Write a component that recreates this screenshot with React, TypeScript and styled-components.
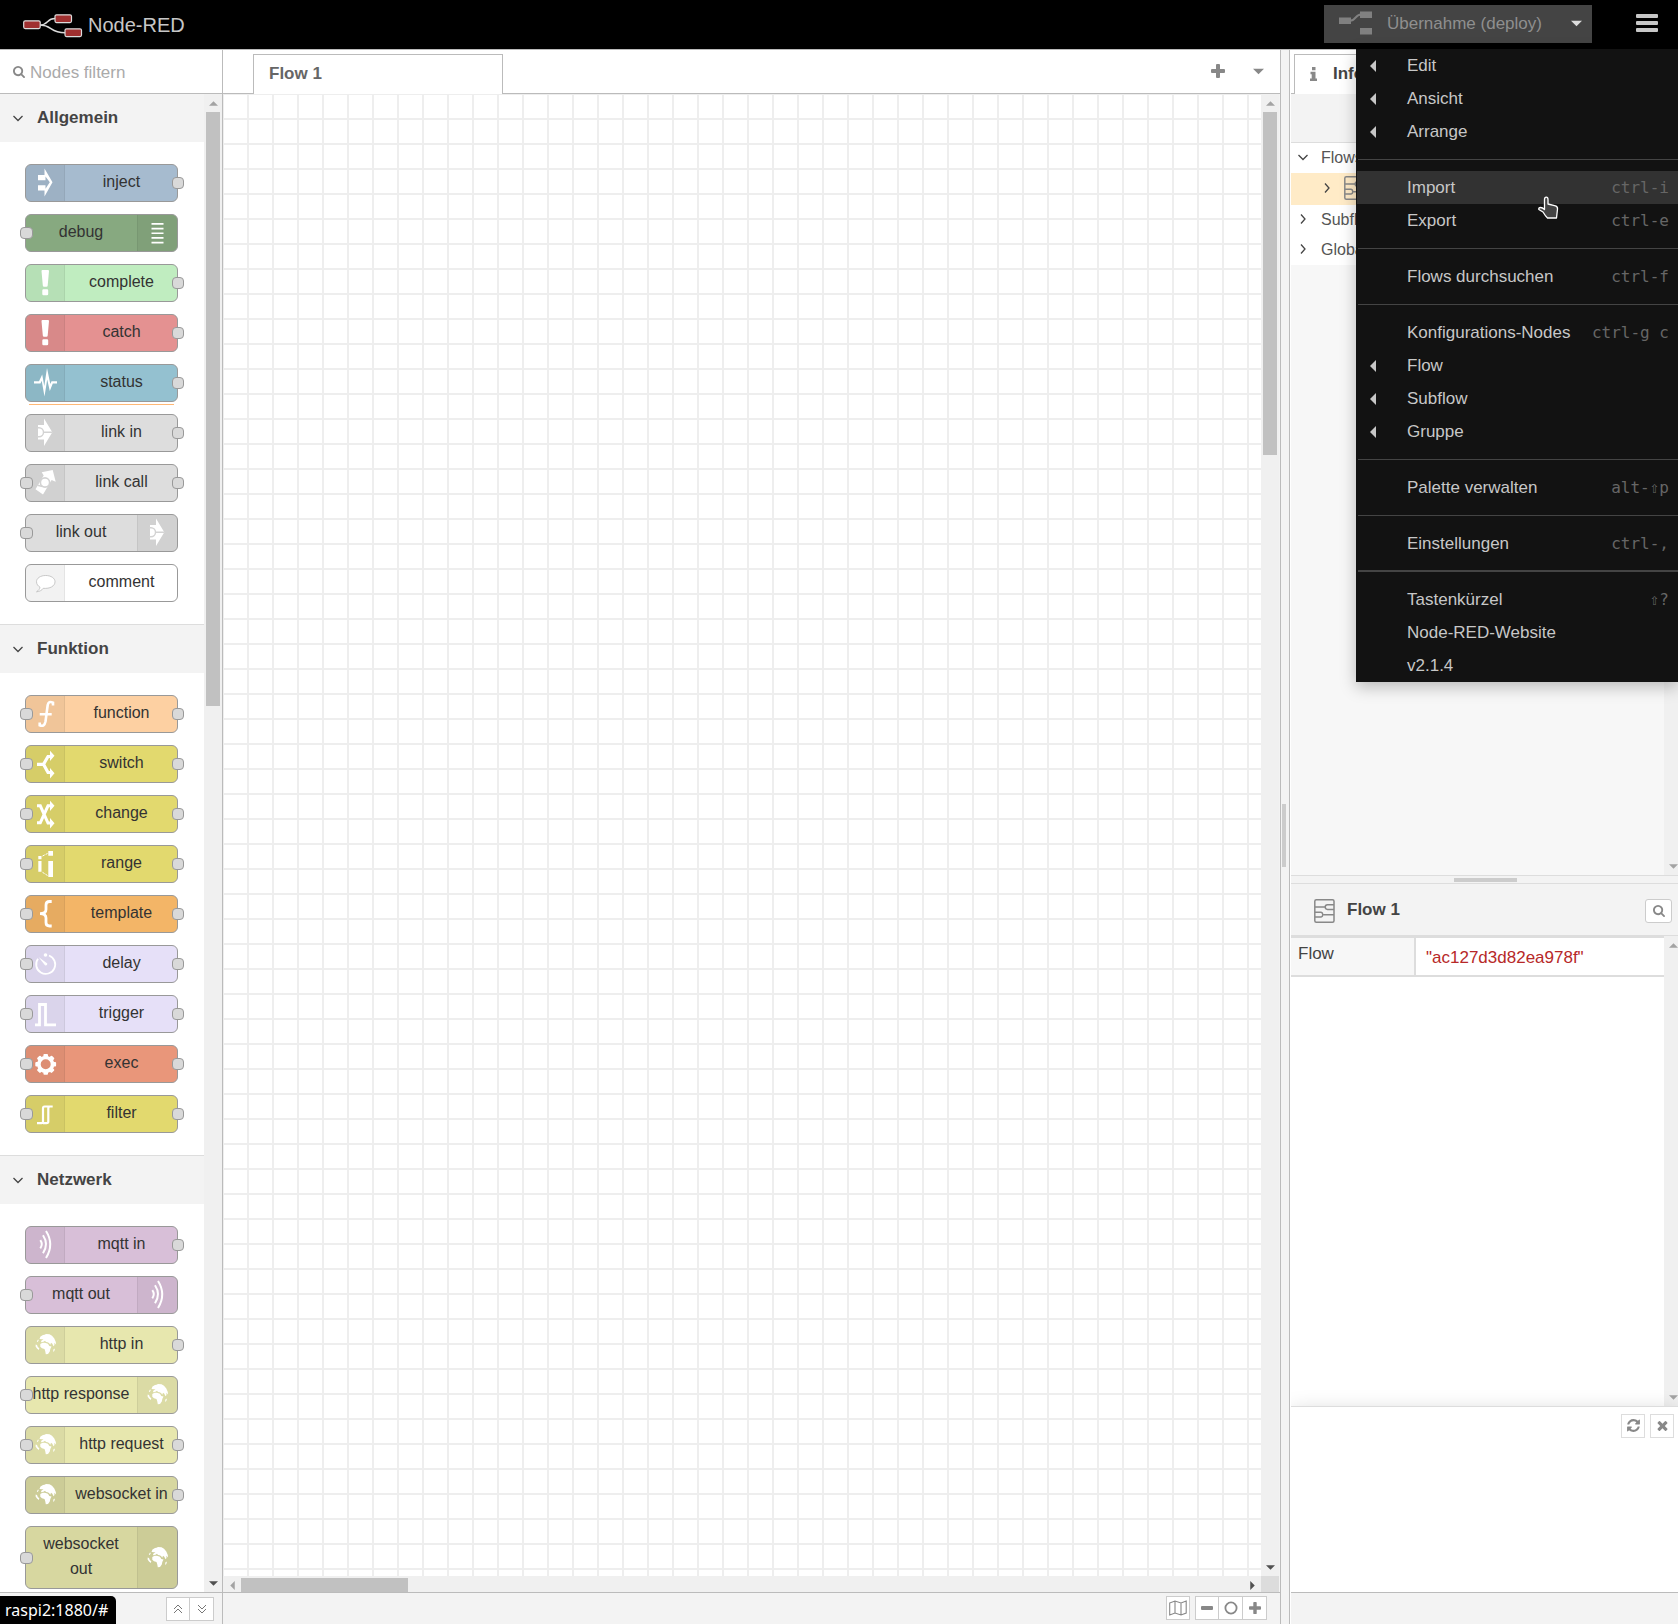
import React from "react";
import styled, { createGlobalStyle, css } from "styled-components";

const c = {
  line: "#bbbbbb",
  soft: "#dddddd",
  panel: "#f3f3f3",
  track: "#f0f0f0",
  thumb: "#c1c1c1",
  text: "#444444",
  icon: "#888888",
  menuText: "#c7c7c7",
};

const Global = createGlobalStyle`
  *, *::before, *::after { box-sizing: border-box; }
  body { margin: 0; background: #fff; color: ${c.text}; font: 17px/25px "Liberation Sans", Arial, sans-serif; }
  button, input { font: inherit; color: inherit; border: 0; padding: 0; margin: 0; background: none; }
  ul { list-style: none; margin: 0; padding: 0; }
  h1, h2, h3 { margin: 0; font-size: 17px; }
  svg { display: block; flex: none; }
`;

/* ---------- frame ---------- */

const Shell = styled.div`
  height: 100vh;
  display: flex;
  flex-direction: column;
  position: relative;
  overflow: hidden;
`;

const Header = styled.header`
  height: 49px;
  flex: none;
  background: #000;
  display: flex;
  align-items: center;
  justify-content: space-between;
  padding: 0 20px 0 23px;
`;

const Brand = styled.h1`
  display: flex;
  align-items: center;
  gap: 5px;
  font-size: 20px;
  font-weight: 400;
  color: #c7c7c7;
  padding-top: 2px;
`;

const HeaderTools = styled.div`
  display: flex;
  align-items: center;
  gap: 44px;
`;

const DeployGroup = styled.div`
  display: flex;
  height: 38px;
  background: #444;
  margin-bottom: 1px;
`;

const DeployButton = styled.button`
  display: flex;
  align-items: center;
  gap: 15px;
  padding: 0 0 2px 15px;
  width: 236px;
  color: #8f8f8f;
`;

const DeployCaret = styled.button`
  width: 32px;
  display: flex;
  align-items: center;
  padding: 0 0 2px 11px;
`;

const MenuButton = styled.button`
  display: flex;
  flex-direction: column;
  gap: 3px;
  width: 22px;
  margin-bottom: 3px;
`;

const MenuBar = styled.span`
  height: 4px;
  border-radius: 1px;
  background: #c7c7c7;
`;

const Main = styled.main`
  flex: 1;
  min-height: 0;
  display: flex;
  border-top: 1px solid ${c.line};
`;

const Footer = styled.footer<{ $pad?: string }>`
  height: 32px;
  flex: none;
  border-top: 1px solid ${c.line};
  background: ${c.panel};
  display: flex;
  justify-content: flex-end;
  align-items: flex-start;
  padding: ${(p) => p.$pad || "4px 8px 0"};
`;

/* ---------- scroll bars ---------- */

const Bar = styled.div<{ $across?: boolean }>`
  flex: none;
  display: flex;
  background: ${c.track};
  ${(p) =>
    p.$across
      ? css`
          height: 16px;
          flex: 1;
          padding-top: 2px;
        `
      : css`
          width: 18px;
          flex-direction: column;
          padding-left: 2px;
        `}
`;

const BarEnd = styled.div<{ $across?: boolean }>`
  flex: none;
  width: ${(p) => (p.$across ? "18px" : "14px")};
  height: ${(p) => (p.$across ? "14px" : "18px")};
  display: flex;
  align-items: center;
  justify-content: center;
`;

const BarTrack = styled.div`
  flex: 1;
  min-width: 0;
  min-height: 0;
`;

const Thumb = styled.div<{ $share: number; $across?: boolean }>`
  background: ${c.thumb};
  width: ${(p) => (p.$across ? p.$share + "%" : "14px")};
  height: ${(p) => (p.$across ? "14px" : p.$share + "%")};
`;

const Clip = styled.div`
  flex: none;
  width: 14px;
  overflow: hidden;
  display: flex;
`;

type Dir = "up" | "down" | "left" | "right";
const TRI: Record<Dir, string> = {
  up: "M0 6L4 2L8 6z",
  down: "M0 2L4 6L8 2z",
  left: "M6 0L2 4L6 8z",
  right: "M2 0L6 4L2 8z",
};

const Triangle = ({ dir, color, size = 9 }: { dir: Dir; color: string; size?: number }) => (
  <svg width={size} height={size} viewBox="0 0 8 8" aria-hidden="true">
    <path d={TRI[dir]} fill={color} />
  </svg>
);

function ScrollBar({ share, across, start, end }: { share?: number; across?: boolean; start: string; end: string }) {
  return (
    <Bar $across={across}>
      <BarEnd $across={across}>
        <Triangle dir={across ? "left" : "up"} color={start} />
      </BarEnd>
      <BarTrack>{share ? <Thumb $share={share} $across={across} /> : null}</BarTrack>
      <BarEnd $across={across}>
        <Triangle dir={across ? "right" : "down"} color={end} />
      </BarEnd>
    </Bar>
  );
}

/* ---------- shared icons ---------- */

const SearchIcon = ({ size = 12 }: { size?: number }) => (
  <svg width={size} height={size} viewBox="0 0 1664 1664" fill={c.icon} aria-hidden="true">
    <path d="M1152 704q0-185-131.500-316.500t-316.500-131.500-316.500 131.500-131.500 316.500 131.500 316.500 316.500 131.500 316.500-131.500 131.500-316.500zm512 832q0 52-38 90t-90 38q-54 0-90-38l-343-342q-179 124-399 124-143 0-273.500-55.500t-225-150-150-225-55.500-273.500 55.500-273.500 150-225 225-150 273.500-55.500 273.500 55.500 225 150 150 225 55.500 273.500q0 220-124 399l343 343q37 37 37 90z" />
  </svg>
);

const RefreshIcon = () => (
  <svg width="15" height="15" viewBox="0 0 1792 1792" fill={c.icon} aria-hidden="true">
    <path d="M1639 1056q0 5-1 7-64 268-268 434.500t-478 166.500q-146 0-282.500-55t-243.500-157l-129 129q-19 19-45 19t-45-19-19-45v-448q0-26 19-45t45-19h448q26 0 45 19t19 45-19 45l-137 137q71 66 161 102t187 36q134 0 250-65t186-179q11-17 53-117 8-23 30-23h192q13 0 22.500 9.500t9.500 22.500zm25-800v448q0 26-19 45t-45 19h-448q-26 0-45-19t-19-45 19-45l138-138q-148-137-349-137-134 0-250 65t-186 179q-11 17-53 117-8 23-30 23h-199q-13 0-22.500-9.500t-9.500-22.500v-7q65-268 270-434.500t480-166.500q146 0 284 55.500t245 156.500l130-129q19-19 45-19t45 19 19 45z" />
  </svg>
);

const CloseIcon = () => (
  <svg width="15" height="15" viewBox="0 0 1792 1792" fill={c.icon} aria-hidden="true">
    <path d="M1490 1322q0 40-28 68l-136 136q-28 28-68 28t-68-28l-294-294-294 294q-28 28-68 28t-68-28l-136-136q-28-28-28-68t28-68l294-294-294-294q-28-28-28-68t28-68l136-136q28-28 68-28t68 28l294 294 294-294q28-28 68-28t68 28l136 136q28 28 28 68t-28 68l-294 294 294 294q28 28 28 68z" />
  </svg>
);

const PlusIcon = ({ size = 14 }: { size?: number }) => (
  <svg width={size} height={size} viewBox="0 0 14 14" fill={c.icon} aria-hidden="true">
    <rect x="0" y="5" width="14" height="4" rx="1" />
    <rect x="5" y="0" width="4" height="14" rx="1" />
  </svg>
);

const Chevron = ({ right }: { right?: boolean }) => (
  <svg width="12" height="12" viewBox="0 0 12 12" fill="none" stroke="#444" strokeWidth="1.300" aria-hidden="true">
    <path d={right ? "M4 1.500L8 6L4 10.500" : "M1.500 4L6 8.500L10.500 4"} />
  </svg>
);

const FlowIcon = () => (
  <svg width="21" height="24" viewBox="0 0 21 24" fill="none" stroke="#888" strokeWidth="1.500" aria-hidden="true">
    <rect x="0.800" y="0.800" width="19.200" height="22.400" rx="1.500" />
    <path d="M1 8H11.500M9.500 15.800H20M1 13.300H7a2.500 2.500 0 0 1 0 4.800H1M20 5.800H13.500a2.200 2.200 0 0 0 0 4.600H20" />
  </svg>
);

/* ---------- palette ---------- */

const Palette = styled.aside`
  width: 223px;
  flex: none;
  display: flex;
  flex-direction: column;
  border-right: 1px solid ${c.line};
`;

const Filter = styled.label`
  height: 44px;
  flex: none;
  display: flex;
  align-items: center;
  gap: 5px;
  padding: 2px 8px 0 13px;
  border-bottom: 1px solid ${c.line};
  svg { margin-bottom: 2px; }
`;

const FilterInput = styled.input`
  flex: 1;
  min-width: 0;
  height: 25px;
  outline: 0;
  &::placeholder { color: #aaa; opacity: 1; }
`;

const PaletteBody = styled.div`
  flex: 1;
  min-height: 0;
  display: flex;
`;

const PaletteList = styled.div`
  flex: 1;
  overflow: hidden;
`;

const Category = styled.section`
  border-bottom: 1px solid ${c.soft};
`;

const CategoryHeader = styled.button`
  width: 100%;
  height: 48px;
  background: ${c.panel};
  display: flex;
  align-items: center;
  gap: 13px;
  padding: 0 12px 1px;
  font-weight: 700;
`;

const NodeList = styled.ul`
  display: flex;
  flex-direction: column;
  gap: 12px;
  padding: 22px 26px 22px 25px;
`;

const NodeBox = styled.li<{ $color: string; $flip?: boolean; $rule?: boolean }>`
  position: relative;
  display: flex;
  flex-direction: ${(p) => (p.$flip ? "row-reverse" : "row")};
  min-height: 38px;
  border: 1px solid #999;
  border-radius: 6px;
  background: ${(p) => p.$color};
  ${(p) =>
    p.$rule &&
    css`
      &::after {
        content: "";
        position: absolute;
        left: 3px;
        right: 3px;
        top: 39px;
        height: 1px;
        background: #ffb875;
      }
    `}
`;

const NodeIconCell = styled.span<{ $flip?: boolean }>`
  flex: none;
  width: ${(p) => (p.$flip ? 40 : 39)}px;
  display: flex;
  align-items: center;
  justify-content: center;
  padding-right: ${(p) => (p.$flip ? 2 : 0)}px;
  background: rgba(0, 0, 0, 0.05);
  border-radius: ${(p) => (p.$flip ? "0 5px 5px 0" : "5px 0 0 5px")};
  border: 0 solid rgba(0, 0, 0, 0.06);
  border-width: ${(p) => (p.$flip ? "0 0 0 1px" : "0 1px 0 0")};
`;

const NodeLabel = styled.span<{ $flip?: boolean }>`
  flex: 1;
  min-width: 0;
  padding: ${(p) => (p.$flip ? "4px 7px 7px 6px" : "4px 6px 7px 7px")};
  font-size: 16px;
  line-height: 25px;
  text-align: center;
  color: #333;
`;

const Port = styled.span<{ $side: "in" | "out" }>`
  position: absolute;
  top: calc(50% - 6px);
  ${(p) => (p.$side === "in" ? "left: -6px; width: 13px;" : "right: -7px; width: 12px;")}
  height: 12px;
  border: 1px solid #999;
  border-radius: 4px;
  background: #d9d9d9;
`;

const gear = Array.from({ length: 8 }, (_, i) => i * 45);

const linkArrow = (
  <>
    <path d="M6 7H12V0.500L20.300 14.300L12 28V21.500H6z" />
    <g fill="none" stroke="#d3d3d3" strokeWidth="1.400">
      <path d="M5 9.800h2a4.500 4.500 0 0 1 0 9h-2M11.800 14.300H20" />
    </g>
  </>
);

const waves = (
  <g fill="none" stroke="#fff" strokeWidth="2">
    <path d="M8.300 10.200Q11.300 14.300 8.300 18.300M11 5.300Q17 14.300 11 23.300M14 1Q22.500 14.300 14 28" />
  </g>
);

const globe = (
  <>
    <path d="M7.500 9L8.500 6.500L11 5L12.500 4.800L14 4L17.500 4.200L20 5.800L22.300 8.500L23.800 12L24 14.500L23 13.500L22.300 12.800L22.500 15L21.500 16.300L20.300 13.800L19 12.800L18.300 14.800L17 13L15.500 12.300L14 12L13 10.800L11.500 11.800L9 12.300L9.300 10.800L11.500 9.300L10 9.300z" />
    <path d="M8.300 14L10.500 12.800L13 12.800L16 13.800L17.300 16L19.500 16.500L18.300 19L17.800 21.500L16 24L13.800 24.300L13.300 21.500L12.500 19L10 18.300L8.300 16.800z" />
    <path d="M3.700 14.500L5 15L5.800 17L7.300 18.300L6.800 20L5 18.500L3.600 16.500zM21.300 19.500L23 18.500L22.300 21L21.300 22zM4.800 11.500L6 9.500L6.800 10L5.800 12z" />
  </>
);

const ICONS: Record<string, React.ReactNode> = {
  inject: (
    <path
      fillRule="evenodd"
      d="M6 7H12.500V0.500L20.500 14.300L12.500 28.500V22.500H6V17.300H13.500V20.800L17.800 14.300L13.500 8.500V12.300H6z"
    />
  ),
  debug: <path d="M7.500 5h12v1.700h-12zM7.500 9.700h12v1.700h-12zM7.500 14.400h12v1.700h-12zM7.500 19.100h12v1.700h-12zM7.500 23.700h12v1.700h-12z" />,
  alert: <path d="M9.500 3Q9.500 2 10.500 2H16Q17 2 17 3L15.700 17.500Q15.600 18.700 14.500 18.700H12Q11 18.700 10.800 17.500zM10.300 22.500q0-1.200 1.200-1.200h3.500q1.200 0 1.200 1.200v3.500q0 1.200-1.200 1.200h-3.500q-1.200 0-1.200-1.200z" />,
  status: (
    <path
      d="M2 13.300H7L10.200 6.500L12.300 18L15 0L18.300 16L19.500 13.300H25V15.500H20.800L17.800 23L15.200 11.500L12.500 28.500L9.700 12.800L8.500 15.500H2z"
    />
  ),
  link: linkArrow,
  call: (
    <>
      <path d="M9.700 4.300L20.700 2L23.700 13.700L19.600 12L11 26.500L3.500 21.300L11.700 7.500z" />
      <circle cx="13" cy="14.500" r="4.600" fill="#fff" stroke="#d3d3d3" strokeWidth="1.600" />
      <path d="M10.500 18.500L5.500 17.300" stroke="#d3d3d3" strokeWidth="1.500" />
    </>
  ),
  comment: (
    <path
      d="M13.700 7.500C8.500 7.500 4.500 10.200 4.500 13.700C4.500 16.200 6 18 8 19.200C7.800 21 6.500 22.500 4.500 23.800C7.500 23.500 10 22.300 11.200 20.300C18 21 23 18 23 13.700C23 10.200 19 7.500 13.700 7.500z"
      stroke="#bbb"
      strokeWidth="0.800"
    />
  ),
  function: (
    <path
      d="M21 6.500V3.600Q16.500 1.500 15.700 6L13.500 22.500Q12.300 28.300 7.700 26.300V23.500M7.700 15.300H19.700"
      fill="none"
      stroke="#fff"
      strokeWidth="2.600"
    />
  ),
  switch: (
    <>
      <path d="M5 15.300H11.500L16 7.500H19M11.500 15.300L16 23.500H19" fill="none" stroke="#fff" strokeWidth="3.200" />
      <path d="M18 1.800L22.500 6.800L18 12zM18 19L22.500 24.300L18 29.500z" />
    </>
  ),
  change: (
    <>
      <path d="M5 6.800H8.300L16 24H19M5 23.800H8.300L16 6.800H19" fill="none" stroke="#fff" strokeWidth="3" />
      <path d="M18 1.800L22.500 6.800L18 12zM18 19L22.500 24.300L18 29.500z" />
    </>
  ),
  range: (
    <>
      <path d="M6.300 7h3.200v3.200h-3.200zM6.300 12h3.200v10.700h-3.200zM16.300 2h4.700v4.700h-4.700zM16.300 12h4.700v16h-4.700z" />
      <path d="M10.500 7L15.500 4.500M10.500 23.300L15.500 26.500" stroke="#fff" strokeWidth="1" strokeDasharray="2.500 1" />
    </>
  ),
  template: (
    <path
      d="M19.700 2.500H17.500Q14 2.500 14 6V10.500Q14 14.700 8 14.700Q14 14.700 14 19V23.500Q14 27 17.500 27H19.700"
      fill="none"
      stroke="#fff"
      strokeWidth="2.800"
    />
  ),
  delay: (
    <>
      <path d="M17 6.500A9.500 9.500 0 1 1 6 9.800" fill="none" stroke="#fff" strokeWidth="1.800" />
      <path d="M6.500 8L15.300 14.500Q15.500 16.800 13 16.300z" />
      <circle cx="13.500" cy="6" r="1.800" />
    </>
  ),
  trigger: <path d="M3 25.800H7.500V5.500H13.500V25.800H24" fill="none" stroke="#fff" strokeWidth="2.800" />,
  exec: (
    <g transform="translate(13.700 15.300)">
      <circle r="6.800" fill="none" stroke="#fff" strokeWidth="3.600" />
      {gear.map((a) => (
        <rect key={a} x="-2.300" y="-10.400" width="4.600" height="4" rx="1" transform={`rotate(${a})`} />
      ))}
    </g>
  ),
  filter: (
    <path
      d="M5 24.200H9.500Q11 24.200 11 22.500V9.500Q11 7.500 12.500 7.500H20.700M11 24.200H14.500Q16.300 24.200 16.300 22.500V9.500Q16.300 7.500 18 7.500"
      fill="none"
      stroke="#fff"
      strokeWidth="2.200"
    />
  ),
  waves,
  globe,
};

interface PaletteNode {
  name: string;
  color: string;
  icon: string;
  ports: string;
  flip?: boolean;
  rule?: boolean;
}

const n = (name: string, color: string, icon: string, ports: string, flip?: boolean, rule?: boolean): PaletteNode => ({
  name, color, icon, ports, flip, rule,
});

const CATEGORIES: { title: string; nodes: PaletteNode[] }[] = [
  {
    title: "Allgemein",
    nodes: [
      n("inject", "#a6bbcf", "inject", "o"),
      n("debug", "#87a980", "debug", "i", true),
      n("complete", "#c0edc0", "alert", "o"),
      n("catch", "#e49191", "alert", "o"),
      n("status", "#94c1d0", "status", "o", false, true),
      n("link in", "#dddddd", "link", "o"),
      n("link call", "#dddddd", "call", "io"),
      n("link out", "#dddddd", "link", "i", true),
      n("comment", "#ffffff", "comment", ""),
    ],
  },
  {
    title: "Funktion",
    nodes: [
      n("function", "#fdd0a2", "function", "io"),
      n("switch", "#e2d96e", "switch", "io"),
      n("change", "#e2d96e", "change", "io"),
      n("range", "#e2d96e", "range", "io"),
      n("template", "#f3b567", "template", "io"),
      n("delay", "#e6e0f8", "delay", "io"),
      n("trigger", "#e6e0f8", "trigger", "io"),
      n("exec", "#e9967a", "exec", "io"),
      n("filter", "#e2d96e", "filter", "io"),
    ],
  },
  {
    title: "Netzwerk",
    nodes: [
      n("mqtt in", "#d8bfd8", "waves", "o"),
      n("mqtt out", "#d8bfd8", "waves", "i", true),
      n("http in", "#e7e7ae", "globe", "o"),
      n("http response", "#e7e7ae", "globe", "i", true),
      n("http request", "#e7e7ae", "globe", "io"),
      n("websocket in", "#d7d7a0", "globe", "o"),
      n("websocket out", "#d7d7a0", "globe", "i", true),
    ],
  },
];

function NodeItem({ node }: { node: PaletteNode }) {
  return (
    <NodeBox $color={node.color} $flip={node.flip} $rule={node.rule}>
      <NodeIconCell $flip={node.flip}>
        <svg width="26" height="30" viewBox="0 0 26 30" fill="#fff" aria-hidden="true">
          {ICONS[node.icon]}
        </svg>
      </NodeIconCell>
      <NodeLabel $flip={node.flip}>{node.name}</NodeLabel>
      {node.ports.includes("i") && <Port $side="in" />}
      {node.ports.includes("o") && <Port $side="out" />}
    </NodeBox>
  );
}

/* ---------- small square buttons ---------- */

const ButtonGroup = styled.div`
  display: flex;
`;

const SquareButton = styled.button<{ $soft?: boolean; $round?: boolean; $wide?: boolean }>`
  width: ${(p) => (p.$wide ? 27 : 24)}px;
  height: 24px;
  display: flex;
  align-items: center;
  justify-content: center;
  padding-bottom: 1px;
  border: 1px solid ${(p) => (p.$soft ? c.soft : "#cccccc")};
  border-radius: ${(p) => (p.$round ? 3 : 0)}px;
  background: #fff;
  ${ButtonGroup} & + & { border-left: 0; }
`;

/* ---------- workspace ---------- */

const Workspace = styled.section`
  flex: 1;
  min-width: 0;
  display: flex;
  flex-direction: column;
  background: ${c.panel};
`;

const Tabs = styled.div<{ $pad: number }>`
  height: 44px;
  flex: none;
  display: flex;
  align-items: flex-end;
  background: linear-gradient(${c.line}, ${c.line}) bottom / 100% 1px no-repeat #fff;
  padding-left: ${(p) => p.$pad}px;
`;

const Tab = styled.button<{ $width: number; $strong?: boolean }>`
  width: ${(p) => p.$width}px;
  height: 40px;
  border: 1px solid ${c.line};
  border-bottom: 0;
  background: #fff;
  display: flex;
  align-items: center;
  gap: 16px;
  padding: 0 15px 2px;
  font-weight: 700;
  color: ${(p) => (p.$strong ? c.text : "#666666")};
`;

const TabTools = styled.div`
  margin-left: auto;
  height: 44px;
  display: flex;
  align-items: center;
  gap: 28px;
  padding: 0 16px 2px 0;
  button { display: flex; }
`;

const CanvasRow = styled.div`
  flex: 1;
  min-height: 0;
  display: flex;
  padding-right: 1px;
`;

const CanvasColumn = styled.div`
  flex: 1;
  min-width: 0;
  display: flex;
  flex-direction: column;
`;

const Canvas = styled.div`
  flex: 1;
  background-color: #fff;
  background-image: linear-gradient(#eee 2px, transparent 2px), linear-gradient(90deg, #eee 2px, transparent 2px);
  background-size: 25px 25px;
  background-position: -1px -1px;
`;

const BarRow = styled.div`
  display: flex;
  height: 16px;
`;

const CornerColumn = styled.div`
  display: flex;
  flex-direction: column;
`;

const BarFill = styled.div`
  flex: 1;
  display: flex;
`;

const Corner = styled.div`
  height: 16px;
  background: #dcdcdc;
`;

const FooterTools = styled.div`
  display: flex;
  gap: 5px;
`;

const Separator = styled.div`
  width: 10px;
  flex: none;
  border: solid ${c.line};
  border-width: 0 1px;
  background: ${c.panel};
  display: flex;
  align-items: center;
  padding: 0 0 3px 1px;
`;

const Grip = styled.span<{ $flat?: boolean }>`
  width: ${(p) => (p.$flat ? 63 : 4)}px;
  height: ${(p) => (p.$flat ? 4 : 63)}px;
  background: #ccc;
`;

/* ---------- sidebar ---------- */

const Sidebar = styled.aside`
  width: 388px;
  flex: none;
  display: flex;
  flex-direction: column;
  background: #fff;
  padding-left: 1px;
`;

const Outliner = styled.div`
  flex: 782 0 0;
  min-height: 0;
  display: flex;
  flex-direction: column;
`;

const OutlinerBar = styled.div`
  height: 49px;
  background: ${c.panel};
  border-bottom: 1px solid ${c.soft};
`;

const SplitRow = styled.div`
  flex: 1;
  min-height: 0;
  display: flex;
`;

const Tree = styled.ul`
  flex: 1;
  background: #f7f7f7;
`;

const TreeRow = styled.li<{ $deep?: boolean }>`
  height: ${(p) => (p.$deep ? 32 : 30)}px;
  display: flex;
  align-items: center;
  gap: ${(p) => (p.$deep ? 11 : 12)}px;
  padding: 0 ${(p) => (p.$deep ? 30 : 6)}px 2px;
  background: ${(p) => (p.$deep ? "#ffebc7" : "#fff")};
  font-size: 16px;
  color: #555;
`;

const RowSeparator = styled.div`
  height: 9px;
  flex: none;
  border: solid ${c.soft};
  border-width: 1px 0;
  background: ${c.panel};
  display: flex;
  align-items: center;
  justify-content: center;
  padding-left: 2px;
`;

const InfoHeader = styled.div`
  height: 51px;
  flex: none;
  background: ${c.panel};
  display: flex;
  align-items: center;
  gap: 12px;
  padding: 3px 6px 0 23px;
  h2 { flex: 1; padding-bottom: 3px; }
`;

const Props = styled.div`
  flex: 470 0 0;
  min-height: 0;
  display: flex;
  border-top: 1px solid ${c.soft};
`;

const PropsBody = styled.div`
  flex: 1;
`;

const PropsTable = styled.table`
  width: 100%;
  border-collapse: separate;
  border-spacing: 0;
  border: solid ${c.soft};
  border-width: 2px 0;
  th, td { height: 37px; font-weight: 400; text-align: left; padding: 0 7px; }
  th { width: 123px; background: #f7f7f7; vertical-align: top; padding-top: 3px; }
  td { border-left: 2px solid ${c.soft}; color: #b72828; padding: 1px 10px 0; }
`;

const Tips = styled.div`
  height: 186px;
  flex: none;
  border-top: 1px solid ${c.soft};
  background: #fff;
  box-shadow: 0 5px 20px rgba(0, 0, 0, 0.18);
  clip-path: inset(-30px 0 0 0);
  display: flex;
  justify-content: flex-end;
  align-items: flex-start;
  gap: 5px;
  padding: 7px 4px 0;
`;

/* ---------- main menu ---------- */

const Menu = styled.nav`
  position: absolute;
  top: 49px;
  right: 0;
  width: 322px;
  background: #121212;
  box-shadow: 0 5px 15px rgba(0, 0, 0, 0.25);
`;

const MenuItem = styled.a<{ $hover?: boolean }>`
  height: 33px;
  margin-left: 1px;
  display: flex;
  align-items: center;
  padding: 0 9px 0 10px;
  color: ${c.menuText};
  text-decoration: none;
  background: ${(p) => (p.$hover ? "#323232" : "transparent")};
`;

const MenuMark = styled.span`
  width: 40px;
  padding-left: 1px;
  flex: none;
`;

const Shortcut = styled.kbd`
  margin-left: auto;
  font: 16px/25px "DejaVu Sans Mono", monospace;
  color: #666;
`;

const MenuRule = styled.div<{ $thick?: boolean }>`
  height: ${(p) => (p.$thick ? 2 : 1)}px;
  margin: ${(p) => (p.$thick ? "10px 0 11px 2px" : "11px 0 11px 2px")};
  background: #444;
`;

const Pointer = styled.svg`
  position: absolute;
  top: 196px;
  right: 119px;
`;

const StatusBubble = styled.div`
  position: absolute;
  left: 0;
  bottom: 0;
  height: 28px;
  padding: 2px 8px 0 5px;
  background: #000;
  color: #fff;
  border-radius: 0 5px 0 0;
  font: 16px/25px "Noto Sans", sans-serif;
`;

type Entry = { label: string; keys?: string; sub?: boolean; hover?: boolean };
const MENU: Entry[][] = [
  [{ label: "Edit", sub: true }, { label: "Ansicht", sub: true }, { label: "Arrange", sub: true }],
  [{ label: "Import", keys: "ctrl-i", hover: true }, { label: "Export", keys: "ctrl-e" }],
  [{ label: "Flows durchsuchen", keys: "ctrl-f" }],
  [
    { label: "Konfigurations-Nodes", keys: "ctrl-g c" },
    { label: "Flow", sub: true },
    { label: "Subflow", sub: true },
    { label: "Gruppe", sub: true },
  ],
  [{ label: "Palette verwalten", keys: "alt-⇧p" }],
  [{ label: "Einstellungen", keys: "ctrl-," }],
  [{ label: "Tastenkürzel", keys: "⇧?" }, { label: "Node-RED-Website" }, { label: "v2.1.4" }],
];

export default function App() {
  return (
    <Shell>
      <Global />
      <Header>
        <Brand>
          <svg width="60" height="24" viewBox="0 0 60 24" fill="none" stroke="#dcdcdc" aria-hidden="true">
            <path d="M17 11C26 11 23 4.500 32 4.500M17 11C29 11 27 18.700 42 18.700" strokeWidth="1.500" />
            <g fill="#a03030" strokeWidth="1.200">
              <rect x="0.700" y="6.800" width="16.500" height="7.800" rx="1.500" />
              <rect x="32" y="0.800" width="16.500" height="7.800" rx="1.500" />
              <rect x="42" y="14.800" width="16.500" height="7.800" rx="1.500" />
            </g>
          </svg>
          <span>Node-RED</span>
        </Brand>
        <HeaderTools>
          <DeployGroup>
            <DeployButton>
              <svg width="33" height="24" viewBox="0 0 33 24" aria-hidden="true">
                <path d="M11 9.800C17 9.800 16 3.500 22 3.500" fill="none" stroke="#808080" strokeWidth="2" />
                <path d="M0 6.500h12v6.500H0zM21 0.500h12v6.500H21zM21 17h12v6.500H21z" fill="#808080" />
              </svg>
              Übernahme (deploy)
            </DeployButton>
            <DeployCaret aria-label="Deploy-Optionen">
              <Triangle dir="down" color="#dddddd" size={11} />
            </DeployCaret>
          </DeployGroup>
          <MenuButton aria-label="Menü">
            <MenuBar />
            <MenuBar />
            <MenuBar />
          </MenuButton>
        </HeaderTools>
      </Header>

      <Main>
        <Palette>
          <Filter>
            <SearchIcon />
            <FilterInput type="text" placeholder="Nodes filtern" aria-label="Nodes filtern" />
          </Filter>
          <PaletteBody>
            <PaletteList>
              {CATEGORIES.map((cat) => (
                <Category key={cat.title}>
                  <CategoryHeader>
                    <Chevron />
                    {cat.title}
                  </CategoryHeader>
                  <NodeList>
                    {cat.nodes.map((node) => (
                      <NodeItem key={node.name} node={node} />
                    ))}
                  </NodeList>
                </Category>
              ))}
            </PaletteList>
            <ScrollBar share={40.6} start="#a3a3a3" end="#505050" />
          </PaletteBody>
          <Footer>
            <ButtonGroup>
              <SquareButton aria-label="Alle einklappen">
                <svg width="10" height="10" viewBox="0 0 10 10" fill="none" stroke="#777" aria-hidden="true">
                  <path d="M1 5L5 1L9 5M1 9L5 5L9 9" />
                </svg>
              </SquareButton>
              <SquareButton aria-label="Alle ausklappen">
                <svg width="10" height="10" viewBox="0 0 10 10" fill="none" stroke="#777" aria-hidden="true">
                  <path d="M1 1L5 5L9 1M1 5L5 9L9 5" />
                </svg>
              </SquareButton>
            </ButtonGroup>
          </Footer>
        </Palette>

        <Workspace>
          <Tabs $pad={30}>
            <Tab $width={250}>Flow 1</Tab>
            <TabTools>
              <button aria-label="Flow hinzufügen">
                <PlusIcon />
              </button>
              <button aria-label="Flows auflisten">
                <Triangle dir="down" color={c.icon} size={11} />
              </button>
            </TabTools>
          </Tabs>
          <CanvasRow>
            <CanvasColumn>
              <Canvas />
              <BarRow>
                <ScrollBar across share={16.7} start="#a3a3a3" end="#505050" />
              </BarRow>
            </CanvasColumn>
            <CornerColumn>
              <BarFill>
                <ScrollBar share={23.7} start="#a3a3a3" end="#505050" />
              </BarFill>
              <Corner />
            </CornerColumn>
          </CanvasRow>
          <Footer $pad="3px 13px 0">
            <FooterTools>
              <SquareButton aria-label="Navigator">
                <svg width="18" height="16" viewBox="0 0 18 16" fill="none" stroke="#888" strokeWidth="1.100" aria-hidden="true">
                  <path d="M0.700 3L6 1L12 3L17.200 1V13L12 15L6 13L0.700 15zM6 1V13M12 3V15" />
                </svg>
              </SquareButton>
              <ButtonGroup>
                <SquareButton aria-label="Verkleinern">
                  <svg width="12" height="4" viewBox="0 0 12 4" fill={c.icon} aria-hidden="true">
                    <rect width="12" height="4" rx="1" />
                  </svg>
                </SquareButton>
                <SquareButton aria-label="Zoom zurücksetzen">
                  <svg width="14" height="14" viewBox="0 0 14 14" fill="none" stroke={c.icon} strokeWidth="1.800" aria-hidden="true">
                    <circle cx="7" cy="7" r="5.600" />
                  </svg>
                </SquareButton>
                <SquareButton aria-label="Vergrößern">
                  <PlusIcon size={12} />
                </SquareButton>
              </ButtonGroup>
            </FooterTools>
          </Footer>
        </Workspace>

        <Separator>
          <Grip />
        </Separator>

        <Sidebar>
          <Tabs $pad={3}>
            <Tab $width={250} $strong>
              <svg width="7" height="14" viewBox="0 0 7 14" fill={c.icon} aria-hidden="true">
                <path d="M2 0h3.500v3.300H2zM0.500 4.800H5.500V11.500H7V14H0V11.500H1.700V7.300H0.500z" />
              </svg>
              Info
            </Tab>
          </Tabs>
          <Outliner>
            <OutlinerBar />
            <SplitRow>
              <Tree>
                <TreeRow>
                  <Chevron />
                  Flows
                </TreeRow>
                <TreeRow $deep>
                  <Chevron right />
                  <FlowIcon />
                </TreeRow>
                <TreeRow>
                  <Chevron right />
                  Subflows
                </TreeRow>
                <TreeRow>
                  <Chevron right />
                  Globale
                </TreeRow>
              </Tree>
              <Clip>
                <ScrollBar start="#a3a3a3" end="#a3a3a3" />
              </Clip>
            </SplitRow>
          </Outliner>
          <RowSeparator>
            <Grip $flat />
          </RowSeparator>
          <InfoHeader>
            <FlowIcon />
            <h2>Flow 1</h2>
            <SquareButton $round $wide aria-label="Im Arbeitsbereich anzeigen">
              <SearchIcon />
            </SquareButton>
          </InfoHeader>
          <Props>
            <PropsBody>
              <PropsTable>
                <tbody>
                  <tr>
                    <th scope="row">Flow</th>
                    <td>"ac127d3d82ea978f"</td>
                  </tr>
                </tbody>
              </PropsTable>
            </PropsBody>
            <Clip>
              <ScrollBar start="#a3a3a3" end="#a3a3a3" />
            </Clip>
          </Props>
          <Tips>
            <SquareButton $soft aria-label="Nächster Tipp">
              <RefreshIcon />
            </SquareButton>
            <SquareButton $soft aria-label="Tipps schließen">
              <CloseIcon />
            </SquareButton>
          </Tips>
          <Footer />
        </Sidebar>
      </Main>

      <Menu>
        {MENU.map((group, i) => (
          <React.Fragment key={i}>
            {i > 0 && <MenuRule $thick={i === MENU.length - 1} />}
            {group.map((item) => (
              <MenuItem key={item.label} href="#" $hover={item.hover}>
                <MenuMark>
                  {item.sub && (
                    <svg width="12" height="12" viewBox="0 0 12 12" fill={c.menuText} aria-hidden="true">
                      <path d="M8 0V12L2 6z" />
                    </svg>
                  )}
                </MenuMark>
                {item.label}
                {item.keys && <Shortcut>{item.keys}</Shortcut>}
              </MenuItem>
            ))}
          </React.Fragment>
        ))}
      </Menu>

      <Pointer width="22" height="24" viewBox="0 0 22 24" aria-hidden="true">
        <path
          d="M7.500 13.500V3.500Q7.500 1.200 9.300 1.200Q11 1.200 11 3.500V8L18.500 9.800Q20.800 10.500 20.500 13L19.500 22H10.500Q8 19.500 6 16L1.800 13.500Q1.500 11.500 3.500 11.500Q5.500 11.500 7.500 13.500z"
          fill="#444"
          stroke="#fff"
          strokeWidth="1.300"
          strokeLinejoin="round"
        />
      </Pointer>

      <StatusBubble>raspi2:1880/#</StatusBubble>
    </Shell>
  );
}
